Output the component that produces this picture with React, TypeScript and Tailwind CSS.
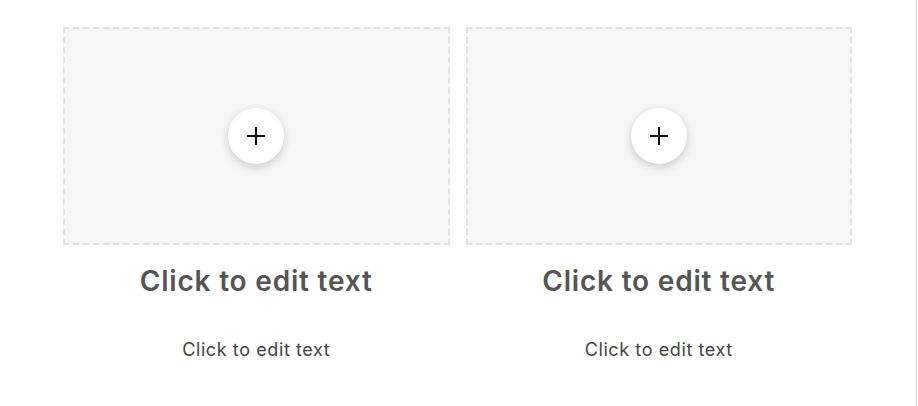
import React from "react";

const PlusIcon = () => (
  <svg width="22" height="22" viewBox="0 0 22 22" fill="none">
    <path d="M11 2v18M2 11h18" stroke="#111" strokeWidth="2" />
  </svg>
);

const Card = () => {
  return (
    <div className="flex flex-col items-center">
      <div className="w-full h-[218px] bg-[#f6f6f6] border-2 border-dashed border-[#e2e2e2] flex items-center justify-center">
        <button className="w-14 h-14 rounded-full bg-white shadow-[0_3px_8px_rgba(0,0,0,0.18)] flex items-center justify-center">
          <PlusIcon />
        </button>
      </div>
      <h2 className="mt-[18px] text-[28px] leading-[36px] font-semibold tracking-[0.8px] text-[#555555]">
        Click to edit text
      </h2>
      <p className="mt-[38px] text-[18px] leading-[26px] tracking-[0.6px] text-[#444444]">
        Click to edit text
      </p>
    </div>
  );
};

export default function App() {
  return (
    <div
      className="w-[918px] h-[406px] bg-white"
      style={{ fontFamily: "Inter, 'Liberation Sans', sans-serif" }}
    >
      <div className="w-[917px] h-full border-r border-[#cfcfcf] pl-[63px] pr-[64px] pt-[27px]">
        <div className="grid grid-cols-2 gap-4">
          <Card />
          <Card />
        </div>
      </div>
    </div>
  );
}
